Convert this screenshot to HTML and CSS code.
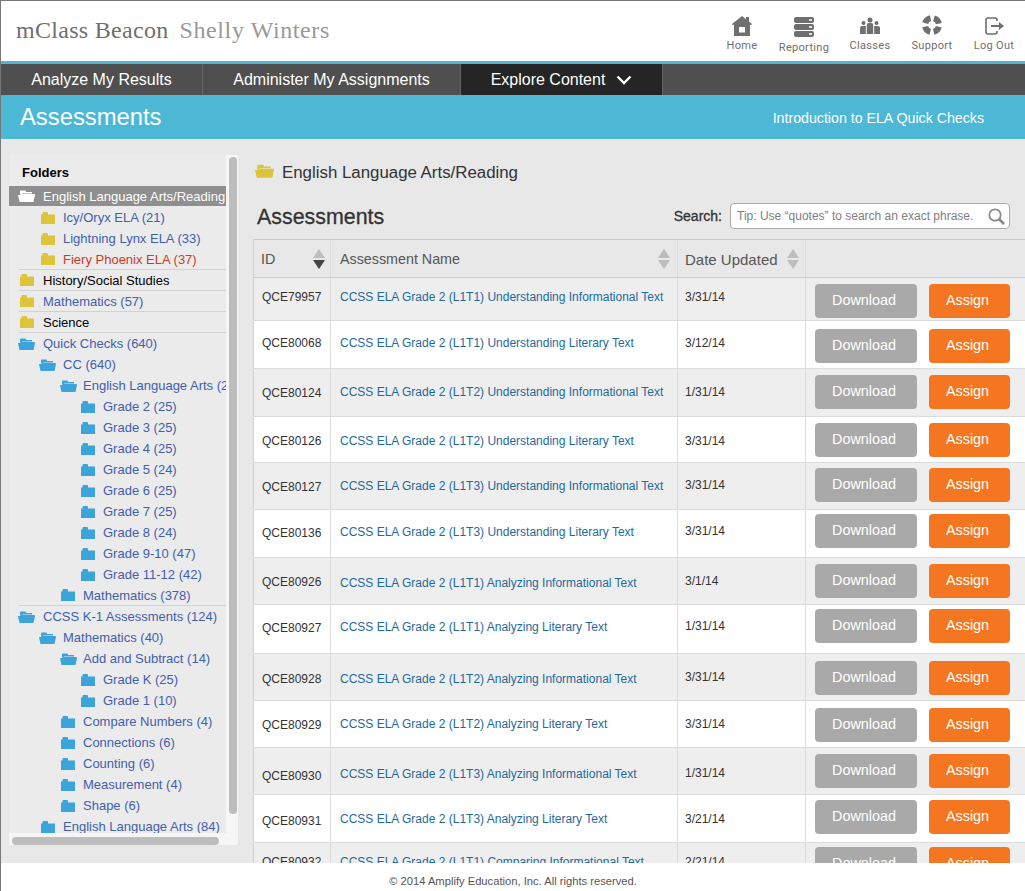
FILE: index.html
```html
<!DOCTYPE html>
<html lang="en">
<head>
  <meta charset="UTF-8">
  <title>mClass Beacon | Assessments</title>
  <link rel="stylesheet" href="styles.css">
</head>
<body>
  <svg class="defs" width="0" height="0">
    <symbol id="closed" viewBox="0 0 14 12"><path d="M0 2.500h1.500V1q0-1 1-1h3.500q1 0 1 1v1.500H14V12H0z"/></symbol>
    <symbol id="open" viewBox="0 0 17 12"><path d="M2 3V1.500q0-1 1-1h4q1 0 1 1V2h6v1.500H4.500L2.500 5z"/><path d="M0 5h17l-1.500 7H1.500z"/><path d="M3 4h14l-.5 1H2.500z"/></symbol>
  </svg>

  <header class="topbar">
    <div class="brand"><span class="product">mClass Beacon</span><span class="user">Shelly Winters</span></div>
    <nav class="toplinks">
      <a class="toplink tl-home">
        <svg width="20" height="20" viewBox="0 0 20 20"><path fill-rule="evenodd" d="M10 0L14 3.200V1h3v4.600L20 8l-1 1.200-1-.8V20H2V8.400l-1 .8L0 8zM7 11v5.500h6V11z"/></svg>
        Home</a>
      <a class="toplink tl-rep">
        <svg width="20" height="20" viewBox="0 0 20 20"><path fill-rule="evenodd" d="M2 0h16q2 0 2 2v2q0 2-2 2H2Q0 6 0 4V2q0-2 2-2zm13 2.300v1.400h3V2.300zM2 7h16q2 0 2 2v2q0 2-2 2H2q-2 0-2-2V9q0-2 2-2zm13 2.300v1.400h3V9.300zM2 14h16q2 0 2 2v2q0 2-2 2H2q-2 0-2-2v-2q0-2 2-2zm13 2.300v1.400h3v-1.400z"/></svg>
        Reporting</a>
      <a class="toplink tl-class">
        <svg width="20" height="17" viewBox="0 0 20 17"><circle cx="10" cy="3" r="2.500"/><path d="M6.800 17V8q0-2 2-2h2.400q2 0 2 2v9z"/><circle cx="3.500" cy="6" r="2"/><path d="M0 17v-6q0-2 2-2h3.800v8z"/><circle cx="16.500" cy="6" r="2"/><path d="M20 17v-6q0-2-2-2h-3.800v8z"/></svg>
        Classes</a>
      <a class="toplink tl-sup">
        <svg width="20" height="20" viewBox="0 0 20 20"><circle cx="10" cy="10" r="7" fill="none" stroke="currentColor" stroke-width="6" stroke-dasharray="7.500 3.500" stroke-dashoffset="-1.750"/></svg>
        Support</a>
      <a class="toplink tl-log">
        <svg width="19" height="18" viewBox="0 0 19 18"><path d="M12 4V3q0-2-2-2H3Q1 1 1 3v12q0 2 2 2h7q2 0 2-2v-1" fill="none" stroke="currentColor" stroke-width="1.600"/><path d="M6 8h8V5l5 4-5 4v-3H6z"/></svg>
        Log Out</a>
    </nav>
  </header>

  <nav class="tabs">
    <a class="tab tab-one">Analyze My Results</a>
    <a class="tab tab-two">Administer My Assignments</a>
    <a class="tab tab-active">Explore Content
      <svg width="16" height="10" viewBox="0 0 16 10"><path d="M1.500 1.500L8 8l6.500-6.500" fill="none" stroke="#fff" stroke-width="2.400"/></svg>
    </a>
  </nav>

  <div class="banner">
    <h1>Assessments</h1>
    <a class="intro">Introduction to ELA Quick Checks</a>
  </div>

  <div class="content">
    <aside class="sidebar">
      <div class="tree">
        <div class="tree-title">Folders</div>
        <div class="node selected level-0"><svg class="ico-open"><use href="#open"/></svg>English Language Arts/Reading</div>
        <div class="node yellow level-1"><svg class="ico"><use href="#closed"/></svg>Icy/Oryx ELA (21)</div>
        <div class="node yellow level-1"><svg class="ico"><use href="#closed"/></svg>Lightning Lynx ELA (33)</div>
        <div class="node yellow level-1 red line"><svg class="ico"><use href="#closed"/></svg>Fiery Phoenix ELA (37)</div>
        <div class="node yellow level-0 black line"><svg class="ico"><use href="#closed"/></svg>History/Social Studies</div>
        <div class="node yellow level-0 line"><svg class="ico"><use href="#closed"/></svg>Mathematics (57)</div>
        <div class="node yellow level-0 black line"><svg class="ico"><use href="#closed"/></svg>Science</div>
        <div class="node level-0"><svg class="ico-open"><use href="#open"/></svg>Quick Checks (640)</div>
        <div class="node level-1"><svg class="ico-open"><use href="#open"/></svg>CC (640)</div>
        <div class="node level-2"><svg class="ico-open"><use href="#open"/></svg>English Language Arts (280)</div>
        <div class="node level-3"><svg class="ico"><use href="#closed"/></svg>Grade 2 (25)</div>
        <div class="node level-3"><svg class="ico"><use href="#closed"/></svg>Grade 3 (25)</div>
        <div class="node level-3"><svg class="ico"><use href="#closed"/></svg>Grade 4 (25)</div>
        <div class="node level-3"><svg class="ico"><use href="#closed"/></svg>Grade 5 (24)</div>
        <div class="node level-3"><svg class="ico"><use href="#closed"/></svg>Grade 6 (25)</div>
        <div class="node level-3"><svg class="ico"><use href="#closed"/></svg>Grade 7 (25)</div>
        <div class="node level-3"><svg class="ico"><use href="#closed"/></svg>Grade 8 (24)</div>
        <div class="node level-3"><svg class="ico"><use href="#closed"/></svg>Grade 9-10 (47)</div>
        <div class="node level-3"><svg class="ico"><use href="#closed"/></svg>Grade 11-12 (42)</div>
        <div class="node level-2 line"><svg class="ico"><use href="#closed"/></svg>Mathematics (378)</div>
        <div class="node level-0"><svg class="ico-open"><use href="#open"/></svg>CCSS K-1 Assessments (124)</div>
        <div class="node level-1"><svg class="ico-open"><use href="#open"/></svg>Mathematics (40)</div>
        <div class="node level-2"><svg class="ico-open"><use href="#open"/></svg>Add and Subtract (14)</div>
        <div class="node level-3"><svg class="ico"><use href="#closed"/></svg>Grade K (25)</div>
        <div class="node level-3"><svg class="ico"><use href="#closed"/></svg>Grade 1 (10)</div>
        <div class="node level-2"><svg class="ico"><use href="#closed"/></svg>Compare Numbers (4)</div>
        <div class="node level-2"><svg class="ico"><use href="#closed"/></svg>Connections (6)</div>
        <div class="node level-2"><svg class="ico"><use href="#closed"/></svg>Counting (6)</div>
        <div class="node level-2"><svg class="ico"><use href="#closed"/></svg>Measurement (4)</div>
        <div class="node level-2"><svg class="ico"><use href="#closed"/></svg>Shape (6)</div>
        <div class="node level-1"><svg class="ico"><use href="#closed"/></svg>English Language Arts (84)</div>
      </div>
      <div class="scroll-y"></div>
      <div class="scroll-x"></div>
    </aside>

    <main class="main">
      <div class="crumb"><svg class="crumb-ico"><use href="#open"/></svg>English Language Arts/Reading</div>
      <div class="title-row">
        <h2>Assessments</h2>
        <label class="search-label">Search:</label>
        <div class="search">
          <span>Tip: Use “quotes” to search an exact phrase.</span>
          <svg width="17" height="17" viewBox="0 0 17 17"><circle cx="7" cy="7" r="5.700" fill="none" stroke="#8a8a8a" stroke-width="1.800"/><path d="M11 11l5 5" stroke="#8a8a8a" stroke-width="2.600"/></svg>
        </div>
      </div>

      <div class="grid">
        <div class="row head">
          <div class="cell c-id">ID<span class="sort sort-down"></span></div>
          <div class="cell c-name">Assessment Name<span class="sort"></span></div>
          <div class="cell c-date">Date Updated<span class="sort"></span></div>
          <div class="cell c-act"></div>
        </div>
        <div class="row r1"><div class="cell c-id">QCE79957</div><div class="cell c-name"><a>CCSS ELA Grade 2 (L1T1) Understanding Informational Text</a></div><div class="cell c-date">3/31/14</div><div class="cell c-act"><a class="btn btn-dl">Download</a><a class="btn btn-as">Assign</a></div></div>
        <div class="row r2"><div class="cell c-id">QCE80068</div><div class="cell c-name"><a>CCSS ELA Grade 2 (L1T1) Understanding Literary Text</a></div><div class="cell c-date">3/12/14</div><div class="cell c-act"><a class="btn btn-dl">Download</a><a class="btn btn-as">Assign</a></div></div>
        <div class="row r3"><div class="cell c-id">QCE80124</div><div class="cell c-name"><a>CCSS ELA Grade 2 (L1T2) Understanding Informational Text</a></div><div class="cell c-date">1/31/14</div><div class="cell c-act"><a class="btn btn-dl">Download</a><a class="btn btn-as">Assign</a></div></div>
        <div class="row r4"><div class="cell c-id">QCE80126</div><div class="cell c-name"><a>CCSS ELA Grade 2 (L1T2) Understanding Literary Text</a></div><div class="cell c-date">3/31/14</div><div class="cell c-act"><a class="btn btn-dl">Download</a><a class="btn btn-as">Assign</a></div></div>
        <div class="row r5"><div class="cell c-id">QCE80127</div><div class="cell c-name"><a>CCSS ELA Grade 2 (L1T3) Understanding Informational Text</a></div><div class="cell c-date">3/31/14</div><div class="cell c-act"><a class="btn btn-dl">Download</a><a class="btn btn-as">Assign</a></div></div>
        <div class="row r6"><div class="cell c-id">QCE80136</div><div class="cell c-name"><a>CCSS ELA Grade 2 (L1T3) Understanding Literary Text</a></div><div class="cell c-date">3/31/14</div><div class="cell c-act"><a class="btn btn-dl">Download</a><a class="btn btn-as">Assign</a></div></div>
        <div class="row r7"><div class="cell c-id">QCE80926</div><div class="cell c-name"><a>CCSS ELA Grade 2 (L1T1) Analyzing Informational Text</a></div><div class="cell c-date">3/1/14</div><div class="cell c-act"><a class="btn btn-dl">Download</a><a class="btn btn-as">Assign</a></div></div>
        <div class="row r8"><div class="cell c-id">QCE80927</div><div class="cell c-name"><a>CCSS ELA Grade 2 (L1T1) Analyzing Literary Text</a></div><div class="cell c-date">1/31/14</div><div class="cell c-act"><a class="btn btn-dl">Download</a><a class="btn btn-as">Assign</a></div></div>
        <div class="row r9"><div class="cell c-id">QCE80928</div><div class="cell c-name"><a>CCSS ELA Grade 2 (L1T2) Analyzing Informational Text</a></div><div class="cell c-date">3/31/14</div><div class="cell c-act"><a class="btn btn-dl">Download</a><a class="btn btn-as">Assign</a></div></div>
        <div class="row r10"><div class="cell c-id">QCE80929</div><div class="cell c-name"><a>CCSS ELA Grade 2 (L1T2) Analyzing Literary Text</a></div><div class="cell c-date">3/31/14</div><div class="cell c-act"><a class="btn btn-dl">Download</a><a class="btn btn-as">Assign</a></div></div>
        <div class="row r11"><div class="cell c-id">QCE80930</div><div class="cell c-name"><a>CCSS ELA Grade 2 (L1T3) Analyzing Informational Text</a></div><div class="cell c-date">1/31/14</div><div class="cell c-act"><a class="btn btn-dl">Download</a><a class="btn btn-as">Assign</a></div></div>
        <div class="row r12"><div class="cell c-id">QCE80931</div><div class="cell c-name"><a>CCSS ELA Grade 2 (L1T3) Analyzing Literary Text</a></div><div class="cell c-date">3/21/14</div><div class="cell c-act"><a class="btn btn-dl">Download</a><a class="btn btn-as">Assign</a></div></div>
        <div class="row r13"><div class="cell c-id">QCE80932</div><div class="cell c-name"><a>CCSS ELA Grade 2 (L1T1) Comparing Informational Text</a></div><div class="cell c-date">2/21/14</div><div class="cell c-act"><a class="btn btn-dl">Download</a><a class="btn btn-as">Assign</a></div></div>
      </div>
    </main>
  </div>

  <footer class="footer">© 2014 Amplify Education, Inc. All rights reserved.</footer>
</body>
</html>
```

FILE: styles.css
```css
* {
  box-sizing: border-box;
}

html, body {
  height: 100%;
}

body {
  margin: 0;
  height: 891px;
  overflow: hidden;
  display: flex;
  flex-direction: column;
  font-family: "Liberation Sans", Arial, sans-serif;
  background-color: #fff;
  border-left: 1px solid #777;
}

.defs {
  position: absolute;
}

/* top bar */
.topbar {
  height: 64px;
  flex: none;
  display: flex;
  justify-content: space-between;
  border-top: 1px solid #777;
  border-bottom: 3px solid #4cb8d6;
}

.brand {
  padding: 14px 0 0 15px;
  font-family: "Liberation Serif", serif;
  font-size: 24px;
  line-height: 30px;
  letter-spacing: 0.3px;
}

.product {
  color: #6f6f6f;
}

.user {
  margin-left: 11px;
  letter-spacing: 0.6px;
  color: #999;
}

.toplinks {
  display: flex;
}

.toplink {
  width: 62px;
  display: flex;
  flex-direction: column;
  align-items: center;
  font-family: Roboto, sans-serif;
  font-size: 11px;
  line-height: 13px;
  letter-spacing: 0.3px;
  color: #6f6f6f;
  fill: #6f6f6f;
}

.tl-home { width: 54px; padding-top: 15px; gap: 3px; }
.tl-rep { width: 70px; padding-top: 16px; gap: 4px; }
.tl-class { padding-top: 16px; gap: 5px; }
.tl-sup { padding-top: 14px; gap: 4px; }
.tl-log { padding-top: 16px; gap: 4px; }

/* tabs */
.tabs {
  height: 31px;
  flex: none;
  display: flex;
  background-color: #4f4f4f;
  color: #fff;
  font-size: 16px;
  line-height: 31px;
}

.tab {
  display: flex;
  align-items: center;
  justify-content: center;
  gap: 11px;
  border-right: 1px solid #666;
}

.tab-one {
  width: 202px;
}

.tab-two {
  width: 258px;
}

.tab-active {
  width: 202px;
  background-color: #252525;
}

.banner {
  height: 44px;
  flex: none;
  display: flex;
  justify-content: space-between;
  align-items: center;
  padding: 0 41px 0 19px;
  background-color: #4cb8d6;
  color: #fff;
}

.banner h1 {
  margin: 0;
  font-size: 23.8px;
  font-weight: normal;
}

.intro {
  padding-top: 2px;
  font-size: 14.2px;
}

/* body */
.content {
  flex: 1;
  min-height: 0;
  display: flex;
  background-color: #e8e8e8;
}

/* folders */
.sidebar {
  position: relative;
  width: 229px;
  height: 690px;
  margin: 16px 15px 0 8px;
  flex: none;
  background-color: #f6f6f6;
}

.tree {
  width: 217px;
  height: 678px;
  overflow: hidden;
  background-color: #ebebeb;
  font-size: 13px;
  color: #3f60ae;
}

.tree-title {
  height: 31px;
  padding: 10px 0 0 13px;
  line-height: 16px;
  font-weight: bold;
  color: #000;
}

.node {
  position: relative;
  height: 21px;
  display: flex;
  align-items: center;
  white-space: nowrap;
  fill: #3ba4da;
}

.node.line {
  border-bottom: 1px solid #d2d2d2;
  margin-left: 10px;
}

.yellow {
  fill: #dcc53a;
}

.red {
  color: #cb3b2c;
}

.black {
  color: #000;
}

.selected {
  height: 20px;
  margin-bottom: 1px;
  background-color: #8f8f8f;
  color: #fff;
  fill: #fff;
}

.ico {
  width: 14px;
  height: 12px;
  margin-right: 8px;
  flex: none;
}

.ico-open {
  width: 17px;
  height: 12px;
  margin-right: 8px;
  flex: none;
}

.level-0 { padding-left: 9px; }
.level-0 .ico { margin: 0 9px 0 2px; }
.level-0.line { padding-left: 0; }
.level-0.line .ico { margin-left: 1px; }
.level-1 { padding-left: 32px; }
.level-1.line { padding-left: 22px; }
.level-1 .ico-open { margin-left: -2px; margin-right: 7px; }
.level-2 { padding-left: 51px; }
.level-2.line { padding-left: 41px; }
.level-2 .ico { margin-left: 1px; margin-right: 8px; }
.level-2 .ico-open { margin-right: 6px; }
.level-3 { padding-left: 72px; }

.scroll-y {
  position: absolute;
  top: 2px;
  right: 1px;
  width: 8px;
  height: 657px;
  border-radius: 4px;
  background-color: #bdbdbd;
}

.scroll-x {
  position: absolute;
  left: 3px;
  bottom: 0;
  width: 207px;
  height: 8px;
  border-radius: 4px;
  background-color: #bdbdbd;
}

/* assessments */
.main {
  flex: 1;
  min-width: 0;
  overflow: hidden;
}

.crumb {
  height: 46px;
  padding: 21px 0 0 2px;
  display: flex;
  align-items: center;
  font-size: 16.85px;
  color: #333;
  fill: #dcc53a;
}

.crumb-ico {
  width: 19px;
  height: 14px;
  margin: 0 8px 4px 0;
}

.title-row {
  height: 54px;
  padding: 18px 15px 0 4px;
  display: flex;
  align-items: flex-start;
  color: #333;
}

.title-row h2 {
  margin: 0 auto 0 0;
  font-size: 21.4px;
  line-height: 28px;
  font-weight: normal;
  -webkit-text-stroke: 0.3px #333;
}

.search-label {
  margin-right: 8px;
  font-size: 14px;
  line-height: 26px;
  -webkit-text-stroke: 0.3px #333;
}

.search {
  width: 280px;
  height: 26px;
  padding: 0 4px 0 6px;
  display: flex;
  align-items: center;
  justify-content: space-between;
  background-color: #fff;
  border: 1px solid #aaa;
  border-radius: 4px;
  font-size: 12px;
  color: #808080;
}

.grid {
  width: 772px;
  border-top: 1px solid #ccc;
}

.row {
  display: flex;
  border-bottom: 1px solid #dcdcdc;
  background-color: #fff;
  font-size: 12px;
  color: #333;
}

.row:nth-child(even) {
  background-color: #eee;
}

.head {
  height: 38px;
  background-color: #e8e8e8;
  border-bottom-color: #ccc;
  font-size: 14.3px;
  color: #555;
}

.head .c-date {
  font-size: 15px;
}

.cell {
  position: relative;
  border-right: 1px solid #dcdcdc;
}

.c-id {
  width: 78px;
  padding: var(--id, 11px) 0 0 8px;
  border-left: 1px solid #d0d0d0;
}

.c-name {
  width: 347px;
  padding: var(--name, 11px) 0 0 9px;
}

.c-date {
  width: 128px;
  padding: var(--date, 11px) 0 0 7px;
}

.c-act {
  flex: 1;
  display: flex;
  gap: 12px;
  padding: var(--btn, 5px) 0 0 9px;
  border-right: none;
}

.c-name a {
  color: #1f6a9c;
}

.head .c-id { padding-left: 7px; }

.sort {
  position: absolute;
  top: 9px;
  right: 4px;
  width: 13px;
  height: 20px;
}

.sort::before,
.sort::after {
  content: "";
  position: absolute;
  left: 0;
  border-left: 6.5px solid transparent;
  border-right: 6.5px solid transparent;
}

.sort::before {
  top: 0;
  border-bottom: 9px solid #bdbdbd;
}

.sort::after {
  bottom: 0;
  border-top: 9px solid #bdbdbd;
}

.sort-down::after {
  border-top-color: #444;
}

.c-date .sort { right: 5px; }
.c-name .sort { right: 6px; }
.c-id .sort { right: 4px; }

.btn {
  height: 34px;
  padding: 0 4px 2px 0;
  display: flex;
  align-items: center;
  justify-content: center;
  border-radius: 4px;
  color: #fff;
  font-size: 14.4px;
}

.btn-dl {
  width: 102px;
  background-color: #a9a9a9;
}

.btn-as {
  width: 81px;
  background-color: #f47621;
}

/* rows are not the same height in this list */
.r1 { height: 43px; --id: 12px; --name: 12px; --date: 12px; --btn: 6px; }
.r2 { height: 48px; --id: 15px; --name: 15px; --date: 15px; --btn: 8px; }
.r3 { height: 48px; --id: 17px; --name: 16px; --date: 16px; --btn: 6px; }
.r4 { height: 46px; --id: 17px; --name: 17px; --date: 17px; --btn: 6px; }
.r5 { height: 47px; --id: 17px; --name: 16px; --date: 15px; --btn: 5px; }
.r6 { height: 48px; --id: 16px; --name: 15px; --date: 14px; --btn: 4px; }
.r7 { height: 47px; --id: 17px; --name: 18px; --date: 16px; --btn: 6px; }
.r8 { height: 49px; --id: 16px; --name: 15px; --date: 14px; --btn: 4px; }
.r9 { height: 47px; --id: 18px; --name: 18px; --date: 16px; --btn: 7px; }
.r10 { height: 47px; --id: 17px; --name: 16px; --date: 16px; --btn: 7px; }
.r11 { height: 47px; --id: 21px; --name: 19px; --date: 18px; --btn: 6px; }
.r12 { height: 48px; --id: 19px; --name: 17px; --date: 17px; --btn: 5px; }
.r13 { height: 48px; --id: 12px; --name: 12px; --date: 12px; --btn: 4px; }

.footer {
  height: 28px;
  flex: none;
  padding-top: 11px;
  text-align: center;
  font-size: 11.2px;
  line-height: 14px;
  color: #555;
}
```
